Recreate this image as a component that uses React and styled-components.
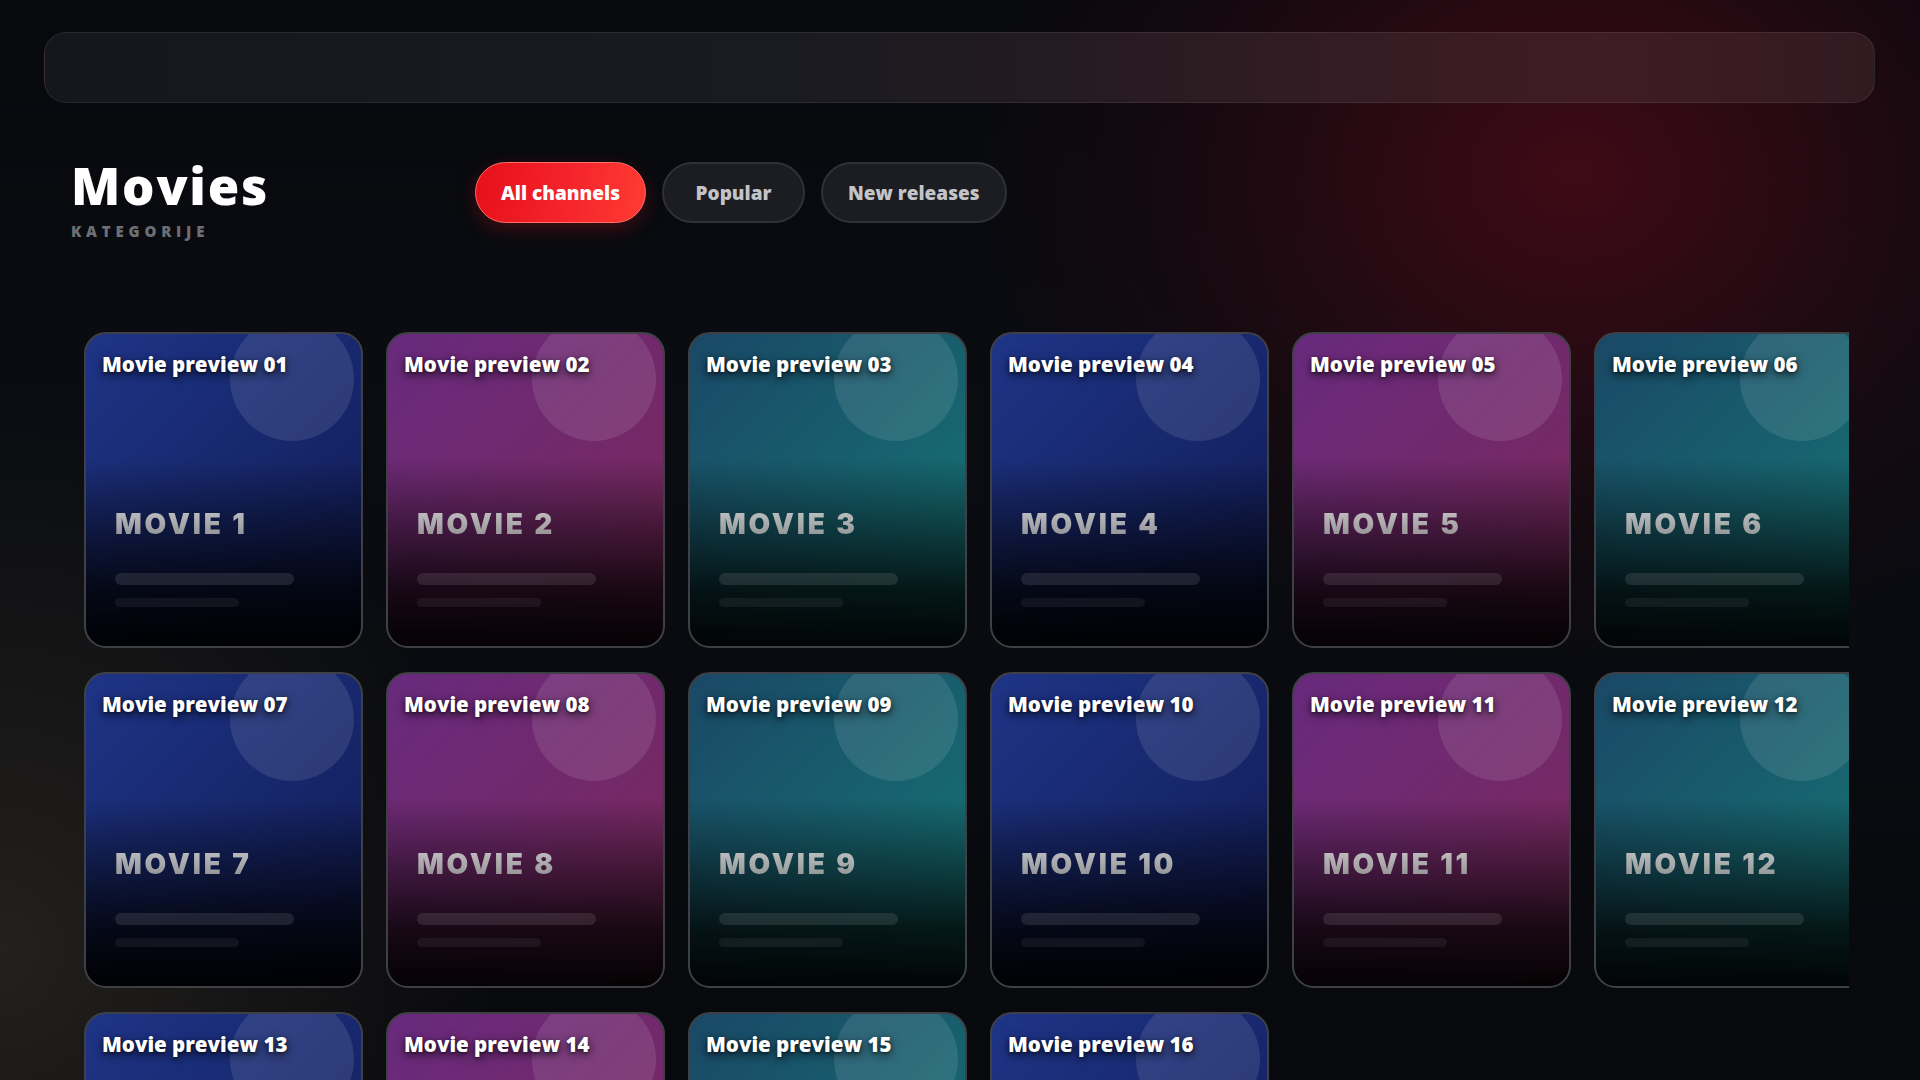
import React from "react";
import styled, { createGlobalStyle } from "styled-components";

const GlobalStyle = createGlobalStyle`
  html, body {
    margin: 0;
    padding: 0;
    height: 100%;
    overflow: hidden;
  }
  body {
    background:
      radial-gradient(ellipse 760px 620px at 82% 16%, rgba(78, 10, 24, 0.78), rgba(40, 8, 16, 0.35) 55%, transparent 80%),
      radial-gradient(ellipse 720px 780px at 0% 88%, rgba(44, 40, 34, 0.75), transparent 70%),
      linear-gradient(180deg, #07090d 0%, #0a0c11 40%, #08090d 100%);
    font-family: "Open Sans", "Noto Sans", sans-serif;
    color: #fff;
  }
  * { box-sizing: border-box; }
`;

const Page = styled.div`
  padding: 32px 45px 0 44px;
  height: 100vh;
  overflow: hidden;
`;

const TopBar = styled.div`
  height: 71px;
  border-radius: 22px;
  border: 1px solid rgba(255, 255, 255, 0.08);
  background: linear-gradient(
    90deg,
    #16171c 0%,
    #191b21 40%,
    #231b21 55%,
    #331c23 70%,
    #401c25 85%,
    #321a21 100%
  );
`;

const Content = styled.main`
  padding: 0 26px 0 27px;
`;

const Header = styled.header`
  margin-top: 57px;
  display: flex;
  align-items: flex-start;
  gap: 27px;
`;

const TitleBlock = styled.div`
  width: 377px;
  display: flex;
  flex-direction: column;
`;

const Title = styled.h1`
  margin: 0;
  font-size: 51px;
  line-height: 50px;
  font-weight: 800;
  letter-spacing: 1.8px;
  color: #ffffff;
`;

const Subtitle = styled.div`
  margin-top: 14px;
  font-size: 15px;
  line-height: 15px;
  font-weight: 800;
  letter-spacing: 4.8px;
  color: #6c6f75;
`;

const Chips = styled.div`
  margin-top: 2px;
  display: flex;
  gap: 16px;
`;

const Chip = styled.button`
  height: 61px;
  min-width: ${(p) => (p.$active ? "0" : "143px")};
  padding: 0 25px;
  display: inline-flex;
  align-items: center;
  justify-content: center;
  border-radius: 999px;
  font-family: "Open Sans", "Noto Sans", sans-serif;
  font-size: 19px;
  font-weight: 800;
  cursor: pointer;
  color: ${(p) => (p.$active ? "#ffffff" : "#c3c4c8")};
  border: ${(p) => (p.$active ? "1.5px solid #ff6f69" : "2px solid #2f3138")};
  background: ${(p) =>
    p.$active
      ? "linear-gradient(100deg, #e5101a 0%, #f4222a 50%, #ff3b33 100%)"
      : "#1b1d23"};
  box-shadow: ${(p) => (p.$active ? "0 6px 18px rgba(230, 20, 30, 0.25)" : "none")};
`;

const GridViewport = styled.section`
  margin-top: 80px;
  overflow: hidden;
`;

const Grid = styled.div`
  display: grid;
  grid-template-columns: repeat(6, 279px);
  column-gap: 23px;
  row-gap: 24px;
  padding: 13px;
  width: max-content;
`;

const palettes = {
  blue: ["#1e3486", "#101a52"],
  purple: ["#682a7e", "#7c2858"],
  teal: ["#1a4866", "#157775"],
};

const Card = styled.article`
  position: relative;
  width: 279px;
  height: 316px;
  border-radius: 22px;
  border: 2px solid #3f4045;
  overflow: hidden;
  display: flex;
  flex-direction: column;
  background:
    linear-gradient(180deg, rgba(0, 0, 0, 0) 40%, rgba(0, 0, 0, 0.45) 63%, rgba(0, 0, 0, 0.8) 82%, rgba(0, 0, 0, 0.96) 100%),
    linear-gradient(135deg, ${(p) => palettes[p.$tone][0]} 0%, ${(p) => palettes[p.$tone][1]} 100%);
`;

const Bubble = styled.div`
  position: absolute;
  top: -17px;
  right: 7px;
  width: 124px;
  height: 124px;
  border-radius: 50%;
  background: rgba(255, 255, 255, 0.1);
`;

const CardTitle = styled.h3`
  position: relative;
  margin: 0;
  padding: 17px 16px 0;
  font-size: 20.5px;
  line-height: 26px;
  font-weight: 800;
  color: #ffffff;
  text-shadow: 0 3px 10px rgba(0, 0, 0, 0.75), 0 1px 3px rgba(0, 0, 0, 0.5);
`;

const CardBody = styled.div`
  margin-top: auto;
  padding: 0 29px 39px;
  display: flex;
  flex-direction: column;
`;

const Poster = styled.div`
  font-family: Inter, "Liberation Sans", Arial, sans-serif;
  font-size: 28px;
  line-height: 34px;
  font-weight: 900;
  letter-spacing: 2.8px;
  background: linear-gradient(180deg, #d2d2d2 0%, #b2b2b2 55%, #959595 100%);
  -webkit-background-clip: text;
  background-clip: text;
  color: transparent;
  opacity: 0.92;
`;

const Line = styled.div`
  width: ${(p) => p.$w}px;
  height: ${(p) => p.$h}px;
  margin-top: ${(p) => p.$mt}px;
  border-radius: 999px;
  background: rgba(255, 255, 255, ${(p) => p.$a});
`;

const tones = ["blue", "purple", "teal"];
const movies = Array.from({ length: 16 }, (_, i) => ({
  id: i + 1,
  tone: tones[i % 3],
}));

export default function App() {
  return (
    <>
      <GlobalStyle />
      <Page>
        <TopBar />
        <Content>
          <Header>
            <TitleBlock>
              <Title>Movies</Title>
              <Subtitle>KATEGORIJE</Subtitle>
            </TitleBlock>
            <Chips>
              <Chip $active>All channels</Chip>
              <Chip>Popular</Chip>
              <Chip>New releases</Chip>
            </Chips>
          </Header>
          <GridViewport>
            <Grid>
              {movies.map((m) => (
                <Card key={m.id} $tone={m.tone}>
                  <Bubble />
                  <CardTitle>
                    Movie preview {String(m.id).padStart(2, "0")}
                  </CardTitle>
                  <CardBody>
                    <Poster>MOVIE {m.id}</Poster>
                    <Line $w={179} $h={12} $mt={32} $a={0.1} />
                    <Line $w={124} $h={9} $mt={13} $a={0.06} />
                  </CardBody>
                </Card>
              ))}
            </Grid>
          </GridViewport>
        </Content>
      </Page>
    </>
  );
}
